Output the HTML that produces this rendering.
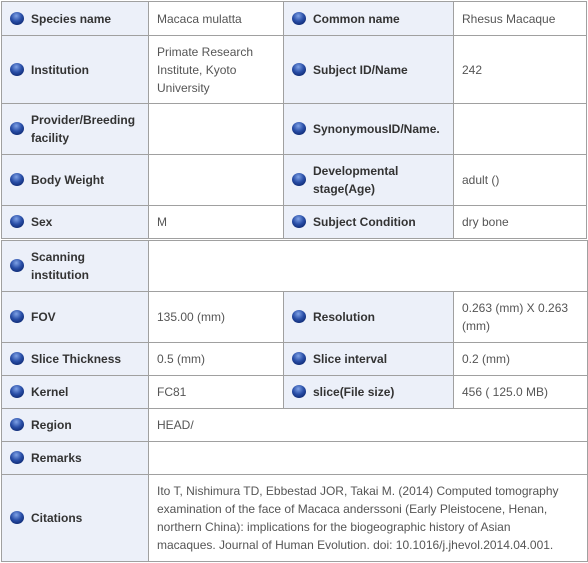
<!DOCTYPE html>
<html><head><meta charset="utf-8"><style>
body{margin:0;background:#fff;width:588px;height:563px;position:relative;overflow:hidden;font-family:"Liberation Sans","Noto Sans CJK JP",sans-serif;}
.c{position:absolute;box-sizing:border-box;border:1px solid #a0a0a0;display:flex;align-items:center;font-size:12px;line-height:18px;}
.l{background:#ecf0f9;color:#333;font-weight:bold;padding-left:29px;padding-right:12px;}
.l::before{content:"";position:absolute;left:8px;top:50%;margin-top:-7px;width:14px;height:13px;border-radius:50%;background:radial-gradient(circle at 45% 30%,#7fa2e6 0%,#2a4fa8 45%,#0e2a74 80%);}
.v{background:#fff;color:#555;padding-left:8px;padding-right:6px;}
</style></head><body>
<div class="c l" style="left:1px;top:1px;width:148px;height:35px">Species name</div>
<div class="c v" style="left:148px;top:1px;width:136px;height:35px">Macaca mulatta</div>
<div class="c l" style="left:283px;top:1px;width:171px;height:35px">Common name</div>
<div class="c v" style="left:453px;top:1px;width:134px;height:35px">Rhesus Macaque</div>

<div class="c l" style="left:1px;top:35px;width:148px;height:69px">Institution</div>
<div class="c v" style="left:148px;top:35px;width:136px;height:69px">Primate Research Institute, Kyoto University</div>
<div class="c l" style="left:283px;top:35px;width:171px;height:69px">Subject ID/Name</div>
<div class="c v" style="left:453px;top:35px;width:134px;height:69px">242</div>

<div class="c l" style="left:1px;top:103px;width:148px;height:52px">Provider/Breeding facility</div>
<div class="c v" style="left:148px;top:103px;width:136px;height:52px"></div>
<div class="c l" style="left:283px;top:103px;width:171px;height:52px">SynonymousID/Name.</div>
<div class="c v" style="left:453px;top:103px;width:134px;height:52px"></div>

<div class="c l" style="left:1px;top:154px;width:148px;height:52px">Body Weight</div>
<div class="c v" style="left:148px;top:154px;width:136px;height:52px"></div>
<div class="c l" style="left:283px;top:154px;width:171px;height:52px">Developmental stage(Age)</div>
<div class="c v" style="left:453px;top:154px;width:134px;height:52px">adult ()</div>

<div class="c l" style="left:1px;top:205px;width:148px;height:34px">Sex</div>
<div class="c v" style="left:148px;top:205px;width:136px;height:34px">M</div>
<div class="c l" style="left:283px;top:205px;width:171px;height:34px">Subject Condition</div>
<div class="c v" style="left:453px;top:205px;width:134px;height:34px">dry bone</div>

<div class="c l" style="left:1px;top:240px;width:148px;height:52px">Scanning institution</div>
<div class="c v" style="left:148px;top:240px;width:440px;height:52px"></div>

<div class="c l" style="left:1px;top:291px;width:148px;height:52px">FOV</div>
<div class="c v" style="left:148px;top:291px;width:136px;height:52px">135.00 (mm)</div>
<div class="c l" style="left:283px;top:291px;width:171px;height:52px">Resolution</div>
<div class="c v" style="left:453px;top:291px;width:135px;height:52px">0.263 (mm) X 0.263 (mm)</div>

<div class="c l" style="left:1px;top:342px;width:148px;height:34px">Slice Thickness</div>
<div class="c v" style="left:148px;top:342px;width:136px;height:34px">0.5 (mm)</div>
<div class="c l" style="left:283px;top:342px;width:171px;height:34px">Slice interval</div>
<div class="c v" style="left:453px;top:342px;width:135px;height:34px">0.2 (mm)</div>

<div class="c l" style="left:1px;top:375px;width:148px;height:34px">Kernel</div>
<div class="c v" style="left:148px;top:375px;width:136px;height:34px">FC81</div>
<div class="c l" style="left:283px;top:375px;width:171px;height:34px">slice(File size)</div>
<div class="c v" style="left:453px;top:375px;width:135px;height:34px">456 ( 125.0 MB)</div>

<div class="c l" style="left:1px;top:408px;width:148px;height:34px">Region</div>
<div class="c v" style="left:148px;top:408px;width:440px;height:34px">HEAD/</div>

<div class="c l" style="left:1px;top:441px;width:148px;height:34px">Remarks</div>
<div class="c v" style="left:148px;top:441px;width:440px;height:34px"></div>

<div class="c l" style="left:1px;top:474px;width:148px;height:88px">Citations</div>
<div class="c v" style="left:148px;top:474px;width:440px;height:88px"><div>Ito T, Nishimura TD, Ebbestad JOR, Takai M. (2014) Computed tomography<br>examination of the face of Macaca anderssoni (Early Pleistocene, Henan,<br>northern China): implications for the biogeographic history of Asian<br>macaques. Journal of Human Evolution. doi: 10.1016/j.jhevol.2014.04.001.</div></div>
</body></html>
